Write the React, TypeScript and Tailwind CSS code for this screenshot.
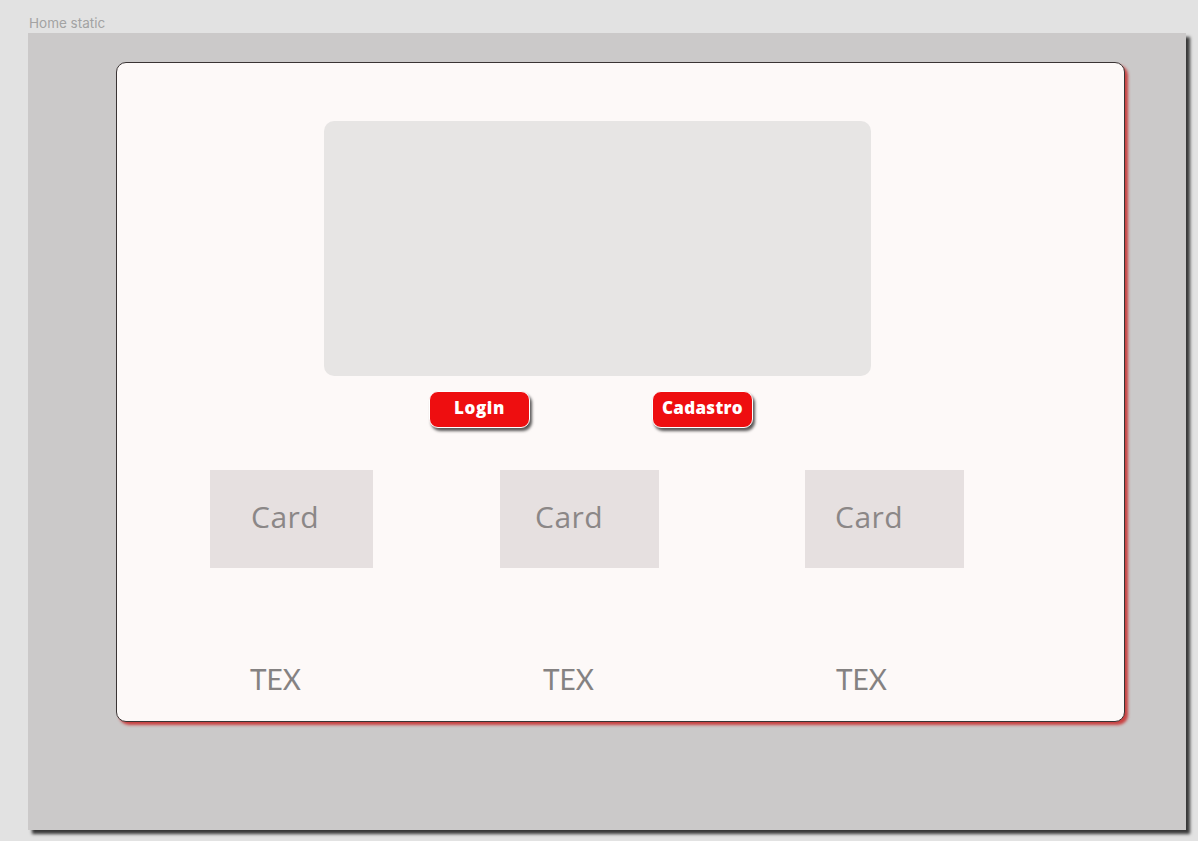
import React from "react";

const cards = [
  { left: "ml-[93px] w-[163px]", text: "pl-[41px]" },
  { left: "ml-[127px] w-[159px]", text: "pl-[35px]" },
  { left: "ml-[146px] w-[159px]", text: "pl-[30px]" },
];

export default function App() {
  return (
    <div className="w-[1198px] h-[841px] bg-[#e2e2e2] overflow-hidden font-['Inter',sans-serif]">
      <div className="pl-[29px] pt-[15px] h-[33px] text-[13.5px] leading-[16px] text-[#a3a3a3]">
        Home static
      </div>
      <div className="ml-[28px] w-[1158px] h-[797px] bg-[#cbc9c9] shadow-[4px_4px_3px_rgba(0,0,0,0.75)] pt-[29px]">
        <div className="ml-[88px] w-[1009px] h-[660px] bg-[#fdf9f8] border border-[#3a3434] rounded-[10px] shadow-[3px_3px_3px_rgba(200,20,20,0.75)] flex flex-col">
          <div className="ml-[207px] mt-[58px] w-[547px] h-[255px] bg-[#e7e5e4] rounded-[10px]" />
          <div className="flex mt-[15px] ml-[312px]">
            <button className="w-[101px] h-[37px] rounded-[9px] bg-[#ee0e10] border border-white text-white font-extrabold text-[17px] tracking-[0.6px] font-['Open_Sans',sans-serif] shadow-[2px_3px_3px_rgba(0,0,0,0.65)] pb-[4px]">
              Login
            </button>
            <button className="ml-[122px] w-[101px] h-[37px] rounded-[9px] bg-[#ee0e10] border border-white text-white font-extrabold text-[17px] tracking-[0.3px] font-['Open_Sans',sans-serif] shadow-[2px_3px_3px_rgba(0,0,0,0.65)] pb-[4px]">
              Cadastro
            </button>
          </div>
          <div className="flex mt-[42px]">
            {cards.map((c, i) => (
              <div key={i} className={`${c.left} h-[98px] bg-[#e6e0e0] flex items-center pb-[6px] ${c.text} text-[30px] text-[#8b8787] font-['Open_Sans',sans-serif] tracking-[0.5px]`}>
                Card
              </div>
            ))}
          </div>
          <div className="flex mt-[95px] text-[28px] leading-[32px] text-[#858282] font-['Lato',sans-serif]">
            <span className="ml-[133px] w-[60px]">TEX</span>
            <span className="ml-[233px] w-[60px]">TEX</span>
            <span className="ml-[233px] w-[60px]">TEX</span>
          </div>
        </div>
      </div>
    </div>
  );
}
